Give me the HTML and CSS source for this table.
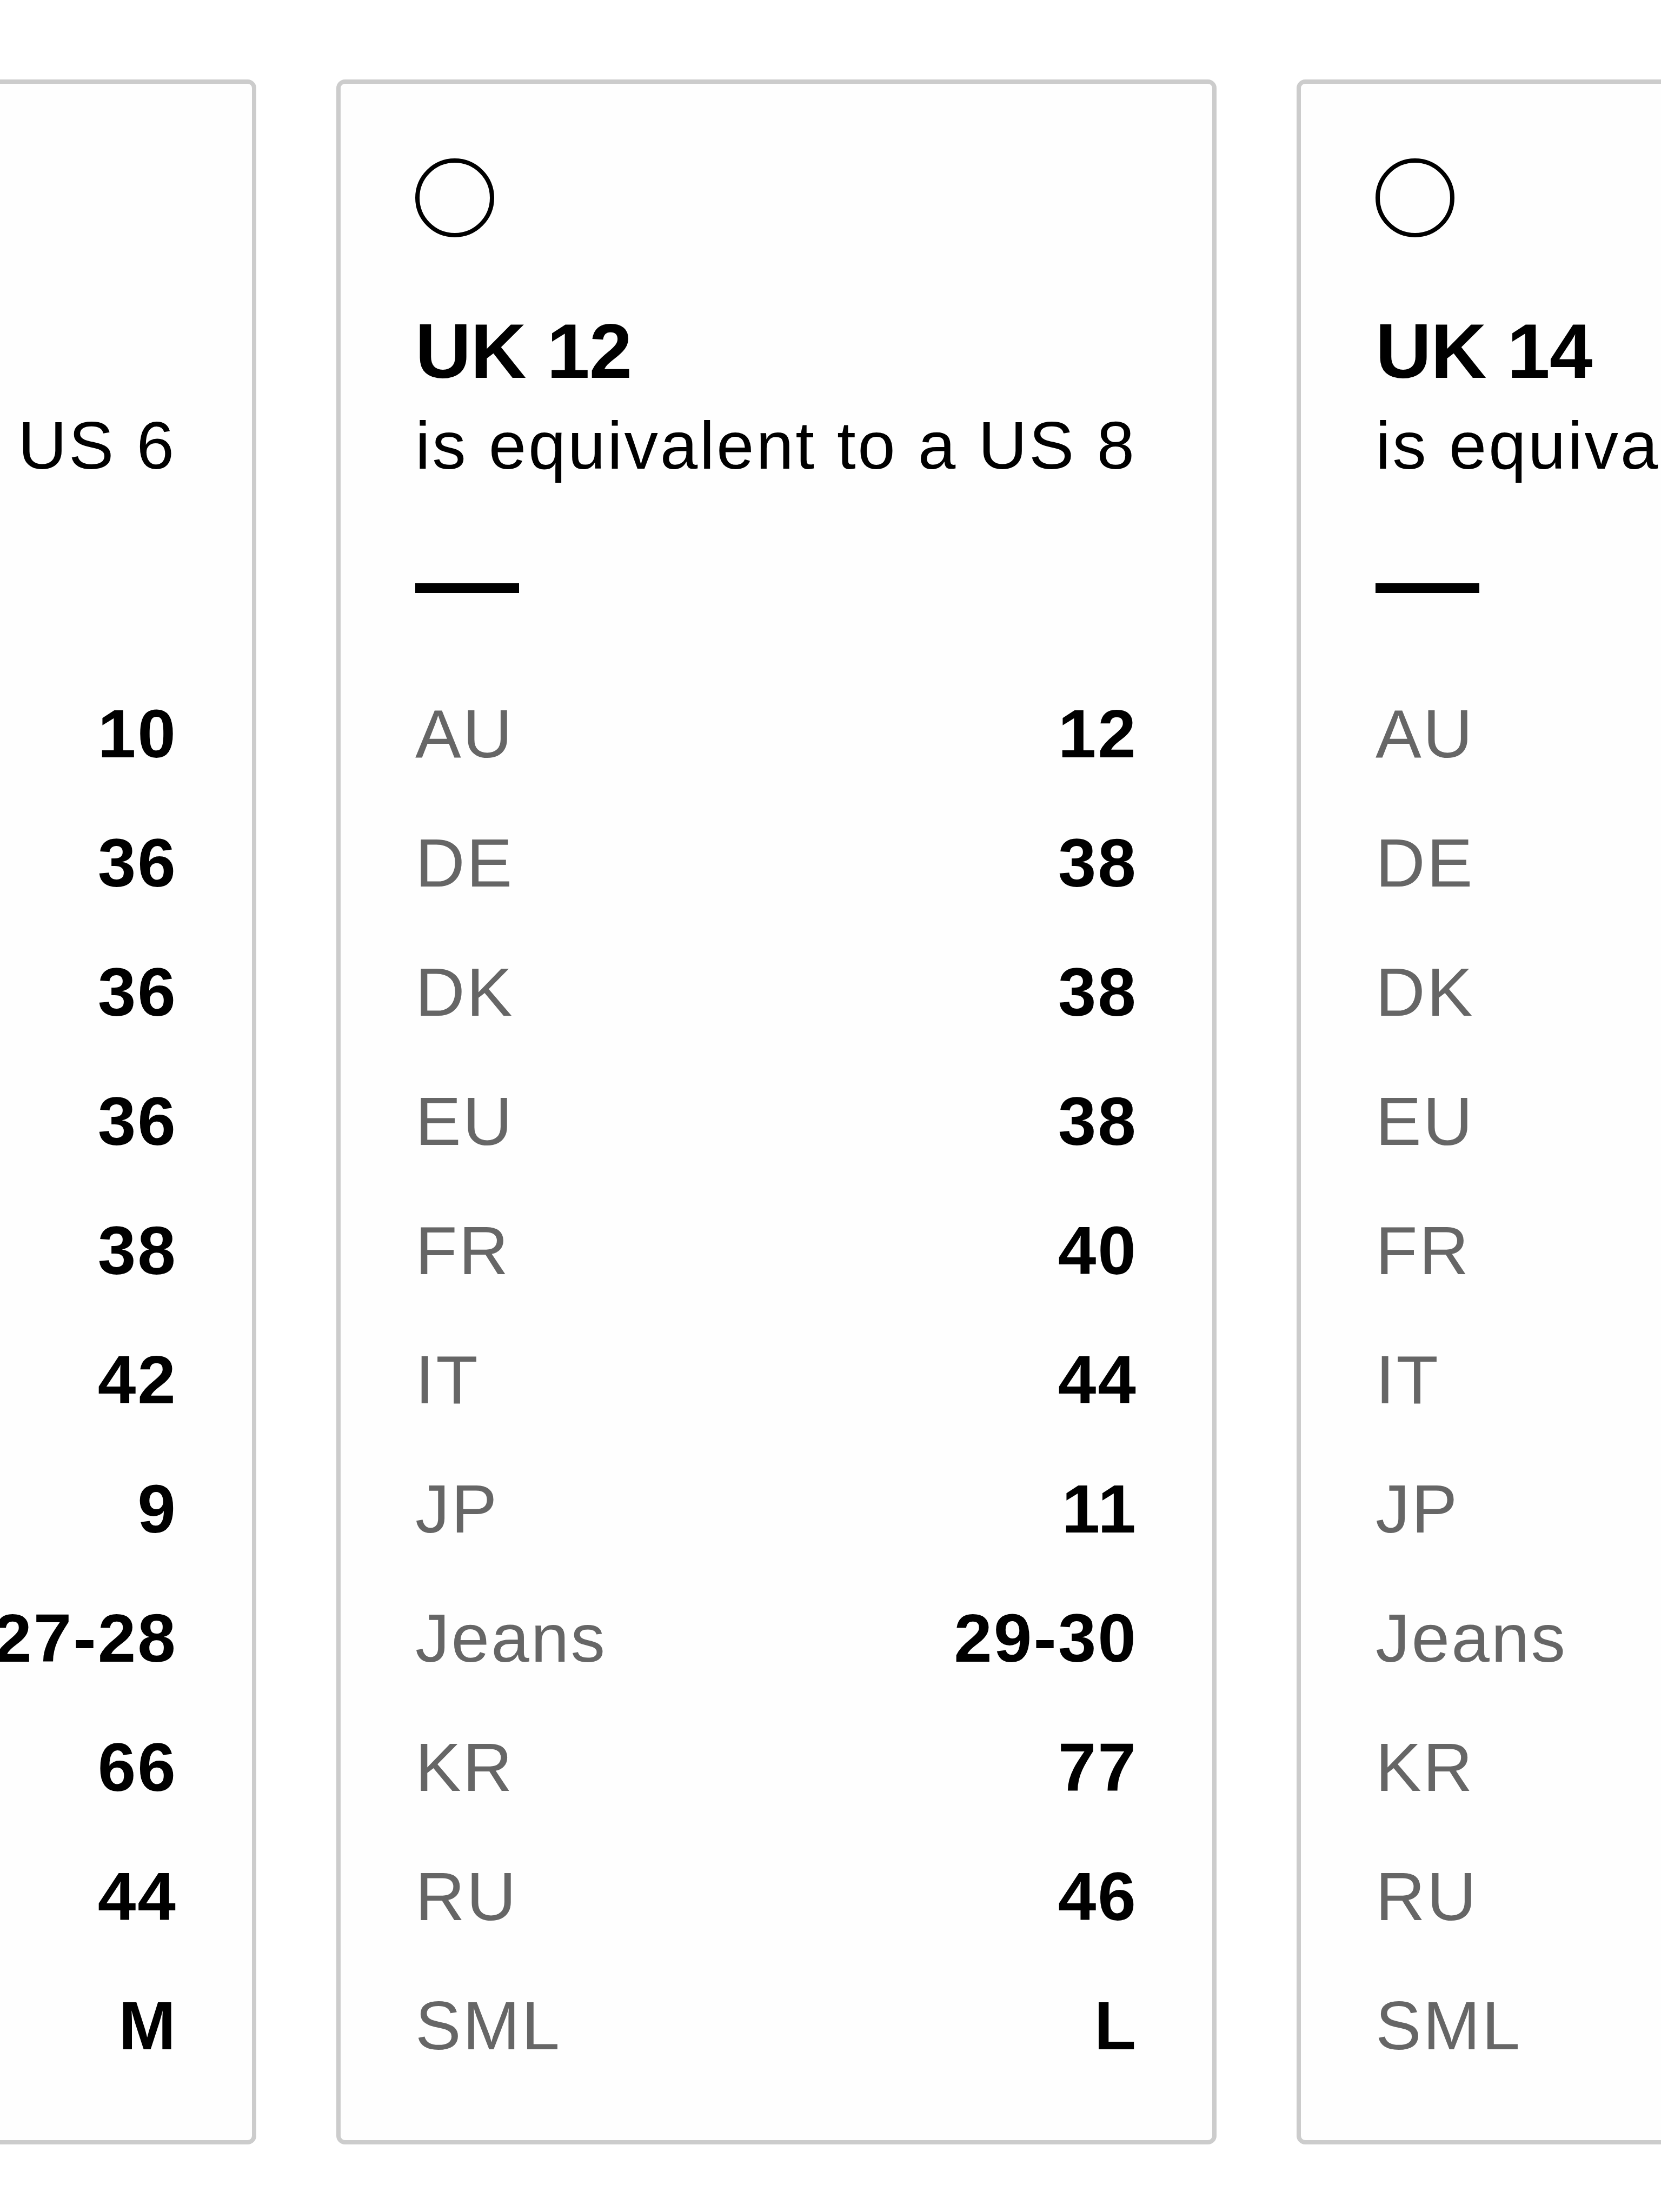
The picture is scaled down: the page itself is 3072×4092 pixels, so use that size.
FILE: index.html
```html
<!DOCTYPE html>
<html lang="en">
<head>
<meta charset="utf-8">
<title>Size conversion</title>
<link rel="stylesheet" href="styles.css">
</head>
<body>
<div class="viewport">
  <div class="track">
    <section class="card">
      <span class="radio"></span>
      <h2 class="size">UK 10</h2>
      <p class="equiv">is equivalent to a US 6</p>
      <div class="rule"></div>
      <dl class="conv">
        <div class="row"><dt>AU</dt><dd>10</dd></div>
        <div class="row"><dt>DE</dt><dd>36</dd></div>
        <div class="row"><dt>DK</dt><dd>36</dd></div>
        <div class="row"><dt>EU</dt><dd>36</dd></div>
        <div class="row"><dt>FR</dt><dd>38</dd></div>
        <div class="row"><dt>IT</dt><dd>42</dd></div>
        <div class="row"><dt>JP</dt><dd>9</dd></div>
        <div class="row"><dt>Jeans</dt><dd>27-28</dd></div>
        <div class="row"><dt>KR</dt><dd>66</dd></div>
        <div class="row"><dt>RU</dt><dd>44</dd></div>
        <div class="row"><dt>SML</dt><dd>M</dd></div>
      </dl>
    </section>
    <section class="card">
      <span class="radio"></span>
      <h2 class="size">UK 12</h2>
      <p class="equiv">is equivalent to a US 8</p>
      <div class="rule"></div>
      <dl class="conv">
        <div class="row"><dt>AU</dt><dd>12</dd></div>
        <div class="row"><dt>DE</dt><dd>38</dd></div>
        <div class="row"><dt>DK</dt><dd>38</dd></div>
        <div class="row"><dt>EU</dt><dd>38</dd></div>
        <div class="row"><dt>FR</dt><dd>40</dd></div>
        <div class="row"><dt>IT</dt><dd>44</dd></div>
        <div class="row"><dt>JP</dt><dd>11</dd></div>
        <div class="row"><dt>Jeans</dt><dd>29-30</dd></div>
        <div class="row"><dt>KR</dt><dd>77</dd></div>
        <div class="row"><dt>RU</dt><dd>46</dd></div>
        <div class="row"><dt>SML</dt><dd>L</dd></div>
      </dl>
    </section>
    <section class="card">
      <span class="radio"></span>
      <h2 class="size">UK 14</h2>
      <p class="equiv">is equivalent to a US 10</p>
      <div class="rule"></div>
      <dl class="conv">
        <div class="row"><dt>AU</dt><dd>14</dd></div>
        <div class="row"><dt>DE</dt><dd>40</dd></div>
        <div class="row"><dt>DK</dt><dd>40</dd></div>
        <div class="row"><dt>EU</dt><dd>40</dd></div>
        <div class="row"><dt>FR</dt><dd>42</dd></div>
        <div class="row"><dt>IT</dt><dd>46</dd></div>
        <div class="row"><dt>JP</dt><dd>13</dd></div>
        <div class="row"><dt>Jeans</dt><dd>31-32</dd></div>
        <div class="row"><dt>KR</dt><dd>88</dd></div>
        <div class="row"><dt>RU</dt><dd>48</dd></div>
        <div class="row"><dt>SML</dt><dd>L</dd></div>
      </dl>
    </section>
  </div>
</div>
</body>
</html>
```
FILE: styles.css
```css
html, body {
  margin: 0;
  padding: 0;
  background: #ffffff;
  overflow: hidden;
}

body {
  font-family: "Liberation Sans", Arial, sans-serif;
  color: #000;
}

.viewport {
  width: 3072px;
  height: 4092px;
  overflow: hidden;
}

.track {
  display: flex;
  gap: 148px;
  padding-top: 147px;
  margin-left: -1154px;
}

.card {
  flex: 0 0 1628px;
  box-sizing: border-box;
  border: 8px solid #cccccc;
  border-radius: 16px;
  background: #fefefe;
  padding: 138px 138px 92px 138px;
}

.radio {
  display: block;
  width: 146px;
  height: 146px;
  box-sizing: border-box;
  border: 8px solid #000;
  border-radius: 50%;
}

.size {
  margin: 138px 0 0 0;
  font-size: 143px;
  line-height: 145px;
  font-weight: 700;
  letter-spacing: -1px;
  white-space: nowrap;
}

.equiv {
  margin: 39px 0 0 0;
  font-size: 125px;
  line-height: 125px;
  font-weight: 400;
  letter-spacing: 3.6px;
  white-space: nowrap;
}

.rule {
  margin-top: 193px;
  width: 192px;
  height: 18px;
  background: #000;
}

.conv {
  margin: 141px 0 0 0;
  padding: 0;
}

.row {
  display: flex;
  justify-content: space-between;
  align-items: baseline;
  height: 239px;
  line-height: 239px;
  font-size: 127px;
}

.row dt {
  color: #666666;
  font-weight: 400;
  letter-spacing: 3px;
}

.row dd {
  margin: 0;
  color: #000;
  font-weight: 700;
  letter-spacing: 3px;
}
```
